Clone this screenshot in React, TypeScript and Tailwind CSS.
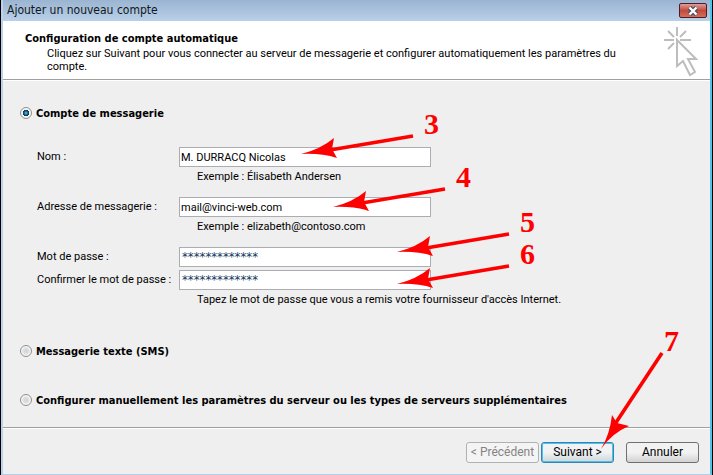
import React, { useState } from 'react';

const Arrow = ({ step, className }: { step: string; className: string }) => (
  <svg width="146" height="58" viewBox="0 -10 146 58" className={`absolute z-10 pointer-events-none ${className}`}>
    <path d="M30 38L113 24" stroke="#ff0000" strokeWidth="3.4" />
    <path d="M1 42Q21 37 34 26L32 37L37 46Q21 41 1 42Z" fill="#ff0000" />
    <text x="124" y="22" fill="#ff0000" fontSize="30" fontWeight="700" fontFamily="'Liberation Serif', serif">{step}</text>
  </svg>
);

const NextArrow = () => (
  <svg width="82" height="134" viewBox="0 -10 82 134" className="absolute z-10 pointer-events-none left-[59px] -top-[125px]">
    <path d="M15 97L62 26" stroke="#ff0000" strokeWidth="3.6" />
    <path d="M1 122Q10 107 12 88L17 96L29 99Q12 106 1 122Z" fill="#ff0000" />
    <text x="64" y="24" fill="#ff0000" fontSize="30" fontWeight="700" fontFamily="'Liberation Serif', serif">7</text>
  </svg>
);

const fields = [
  { id: 'nom', label: 'Nom :', value: 'M. DURRACQ Nicolas', hint: 'Exemple : Élisabeth Andersen', step: '3', arrow: 'left-[121px] -top-[45px]', gap: 'mb-5' },
  { id: 'mail', label: 'Adresse de messagerie :', value: 'mail@vinci-web.com', hint: 'Exemple : elizabeth@contoso.com', step: '4', arrow: 'left-[153px] -top-[42px]', gap: 'mb-5' },
  { id: 'pass', label: 'Mot de passe :', value: '*************', hint: '', step: '5', arrow: 'left-[217px] -top-[47px]', gap: 'mb-[3px]' },
  { id: 'confirm', label: 'Confirmer le mot de passe :', value: '*************', hint: "Tapez le mot de passe que vous a remis votre fournisseur d'accès Internet.", step: '6', arrow: 'left-[217px] -top-[38px]', gap: 'mb-5' },
];

const Field = ({ id, label, value, hint, step, arrow, gap }: any) => (
  <div className={`flex ${hint ? 'h-[30px]' : 'h-5'} ${gap}`}>
    <label htmlFor={id} className="w-[142px] shrink-0 leading-5 whitespace-nowrap">{label}</label>
    <div className="relative">
      <input
        id={id}
        type="text"
        defaultValue={value}
        className={`block w-[252px] h-5 bg-white border border-[#abadb3] outline-none ${value.startsWith('*') ? "font-['DejaVu_Sans_Condensed','DejaVu_Sans',sans-serif] text-[#12395f] text-[13px] pl-0.5 pb-0.5" : 'px-px'}`}
      />
      {hint && <p className="pl-[18px] leading-5 whitespace-nowrap">{hint}</p>}
      <Arrow step={step} className={arrow} />
    </div>
  </div>
);

const Choice = ({ id, label, mode, setMode }: any) => (
  <div className="flex items-center gap-1 h-4">
    <input
      id={id}
      type="radio"
      name="mode"
      checked={mode === id}
      onChange={() => setMode(id)}
      className="appearance-none size-3 shrink-0 rounded-full border border-[#8e8f8f] bg-[radial-gradient(circle,#cfd3d8_0%,#e0e2e5_45%,#f6f6f6_60%)] checked:bg-[radial-gradient(circle_at_50%_50%,#7cc7e8_0%,#1c6f9c_22%,#0b3554_42%,#f4f4f4_50%)]"
    />
    <label htmlFor={id} className="font-['DejaVu_Sans_Condensed','DejaVu_Sans',sans-serif] font-bold">{label}</label>
  </div>
);

export default function App() {
  const [mode, setMode] = useState('auto');

  return (
    <div className="min-h-screen flex flex-col border-l border-r border-black bg-[#efefef] font-[Roboto,sans-serif] text-[11px] leading-[13px] text-black">
      <div className="flex-1 flex flex-col border-l-2 border-r-2 border-b border-l-[#bcd1ea] border-r-[#4fc4ea] border-b-[#b5cfe9]">
        {/* Title bar */}
        <header className="flex items-center justify-between h-[21px] pl-1 pr-[3px] bg-linear-to-b from-[#9bb4d1] to-[#b9d0e9]">
          <h1 className="font-['DejaVu_Sans_Condensed','DejaVu_Sans',sans-serif] text-[12px] text-[#101820]">Ajouter un nouveau compte</h1>
          <button aria-label="Fermer" className="flex items-center justify-center w-7 h-[15px] rounded-[2px] border border-[#4f1c25] bg-linear-to-b from-[#dc9d98] via-[#c1483c] to-[#d0705c]">
            <svg width="12" height="10" viewBox="0 0 12 10">
              <path d="M2.5 1.5L9.5 8.5M9.5 1.5L2.5 8.5" stroke="#4a4f63" strokeWidth="4.6" />
              <path d="M2.5 1.5L9.5 8.5M9.5 1.5L2.5 8.5" stroke="#ffffff" strokeWidth="2.4" />
            </svg>
          </button>
        </header>

        {/* Wizard heading */}
        <div className="flex justify-between h-[59px] pl-[22px] pr-3 pt-2.5 bg-white border-b border-[#a0a0a0]">
          <div>
            <h2 className="font-['DejaVu_Sans_Condensed','DejaVu_Sans',sans-serif] font-bold leading-4">Configuration de compte automatique</h2>
            <p className="pl-[22px] max-w-[600px]">
              Cliquez sur Suivant pour vous connecter au serveur de messagerie et configurer automatiquement les paramètres du compte.
            </p>
          </div>
          <svg width="34" height="50" viewBox="0 0 34 50" className="shrink-0 -mt-1" fill="none" stroke="#bdbdbd" strokeWidth="2">
            <path d="M13 0V9M0 13H10M16 13H27M4 4L10 10M22 4L16 10M4 22L10 16" />
            <path d="M13 13V39L19 34L26 48L31 45L24 32H32Z" />
          </svg>
        </div>

        {/* Form */}
        <main className="flex-1 border-t border-white pl-[17px] pt-6">
          <Choice id="auto" label="Compte de messagerie" mode={mode} setMode={setMode} />
          <div className="pl-[17px] pt-[26px] pb-[23px]">
            {fields.map(f => <Field key={f.id} {...f} />)}
          </div>
          <Choice id="sms" label="Messagerie texte (SMS)" mode={mode} setMode={setMode} />
          <div className="h-[33px]" />
          <Choice id="manual" label="Configurer manuellement les paramètres du serveur ou les types de serveurs supplémentaires" mode={mode} setMode={setMode} />
        </main>

        {/* Buttons */}
        <footer className="flex justify-end h-[47px] pt-[14px] pr-[11px] border-t border-[#a0a0a0] shadow-[inset_0_1px_0_#ffffff]">
          <button disabled className="w-[73px] h-[21px] mr-0.5 rounded-[3px] border border-[#adb2b5] bg-[#f4f4f4] text-[#838383] text-[12px] whitespace-nowrap">&lt; Précédent</button>
          <div className="relative mr-3">
            <button className="block w-[73px] h-[21px] rounded-[3px] border border-[#3c7fb1] bg-linear-to-b from-[#f0f2f3] from-50% to-[#d0d5d8] text-[12px] shadow-[inset_0_0_0_1px_#48c4ee]">Suivant &gt;</button>
            <NextArrow />
          </div>
          <button className="w-[73px] h-[21px] rounded-[3px] border border-[#707070] bg-linear-to-b from-[#f2f2f2] from-50% to-[#d2d2d2] text-[12px]">Annuler</button>
        </footer>
      </div>
    </div>
  );
}
